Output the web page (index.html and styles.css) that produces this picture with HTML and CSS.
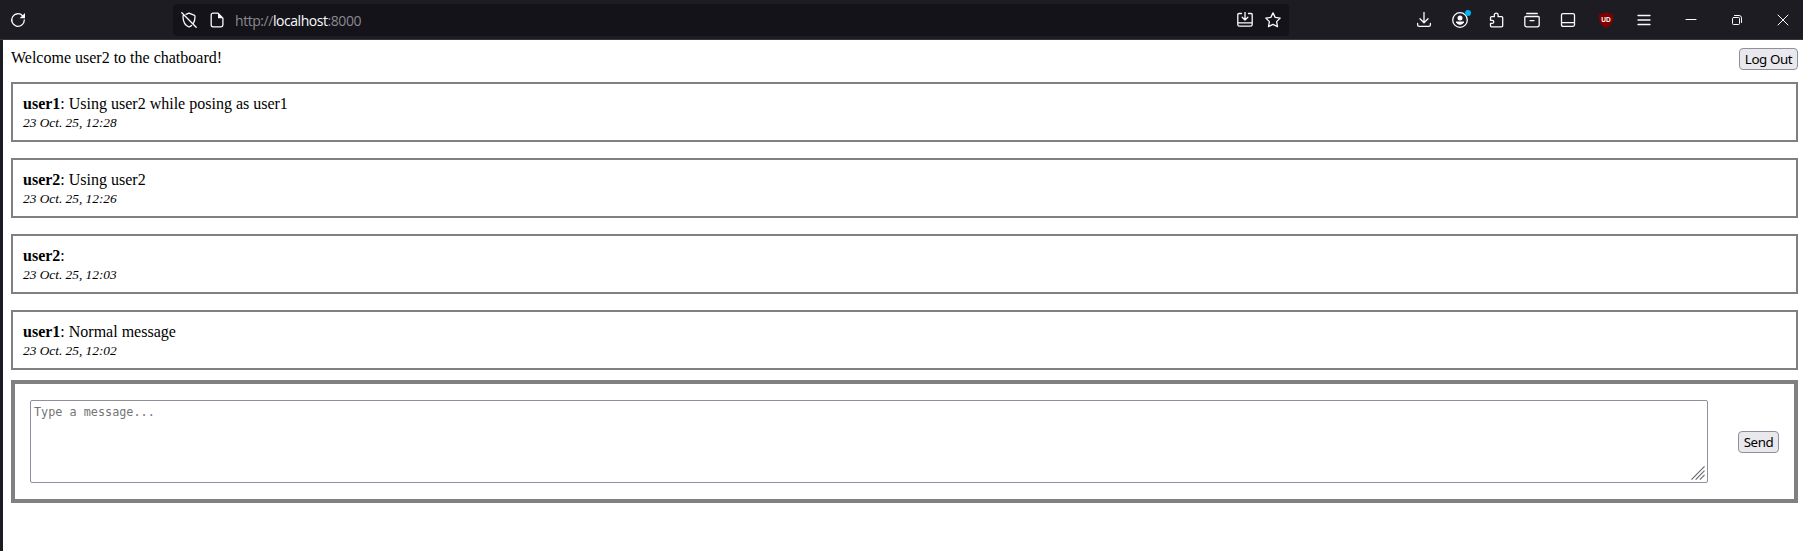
FILE: index.html
```html
<!DOCTYPE html>
<html lang="en">
<head>
<meta charset="utf-8">
<title>Chatboard</title>
<link rel="stylesheet" href="styles.css">
</head>
<body>
<div class="toolbar">
  <span class="tool reload"><svg class="icon" viewBox="0 0 16 16"><path d="M14.3 8A6.3 6.3 0 1 1 12.600 3.700"/><path class="solid" d="M15 1v5.200H9.600z"/></svg></span>
  <div class="urlbar">
    <svg class="icon" viewBox="0 0 16 16"><path d="M5 2.300 8 1.200l5 1.900q1 .4 1 1.400c0 3-.5 5.300-1.800 7.200M10.600 13.500Q9.300 14.500 8 15C4 13.400 2 9.800 2 4.500q0-.6.300-1M.8.800l14.400 14.400"/></svg>
    <svg class="icon" viewBox="0 0 16 16"><path d="M4 1.200h5l4.900 4.900V13q0 1.800-1.800 1.800H4Q2.200 14.800 2.200 13V3Q2.200 1.200 4 1.200z"/><path class="solid" d="M9 1v5.200h5z"/></svg>
    <span class="url">http://<b>localhost</b>:8000</span>
    <svg class="icon install" viewBox="0 0 16 16"><path d="M4.500 1.500H2Q.8 1.500.8 2.700v9.800q0 1.700 1.700 1.700h11q1.700 0 1.700-1.700V2.700q0-1.200-1.200-1.200h-2.500M1 10.800h14M8 0v7.500M5.200 5.200 8 8l2.800-2.800"/></svg>
    <svg class="icon" viewBox="0 0 16 16"><path d="m8 .9 2.200 4.500 5 .7-3.600 3.500.9 5L8 12.300l-4.500 2.300.9-5L.8 6.100l5-.7z"/></svg>
  </div>
  <div class="actions">
    <span class="tool"><svg class="icon" viewBox="0 0 16 16"><path d="M8 .5v10M4 6.700l4 4 4-4M1.600 11.500v1.200q0 1.700 1.700 1.700h9.400q1.700 0 1.700-1.700v-1.200"/></svg></span>
    <span class="tool account"><svg class="icon" viewBox="0 0 16 16"><circle cx="8" cy="8" r="7.300"/><circle class="solid" cx="8" cy="5.900" r="2.500"/><path class="solid" d="M4 9.500h8v.8Q10.800 13 8 13t-4-2.700z"/></svg><i class="dot"></i></span>
    <span class="tool"><svg class="icon" viewBox="0 0 16 16"><path d="M2.500 8.300V5.700q0-1 1-1h2.800V3a1.900 1.900 0 0 1 3.800 0v1.700h3.600q1 0 1 1v8q0 1.100-1 1.100H3.500q-1 0-1-1v-2.500h1.800a1.450 1.450 0 0 0 0-3z"/></svg></span>
    <span class="tool"><svg class="icon" viewBox="0 0 16 16"><path d="M2.700 1.500h10.600M1.800 4.500h12.400q1 0 1 1v7.300q0 2-2 2H2.800q-2 0-2-2V5.500q0-1 1-1zM6 8.600h4"/></svg></span>
    <span class="tool"><svg class="icon" viewBox="0 0 16 16"><path d="M3 1.700h10q1.500 0 1.500 1.500v9.600q0 1.500-1.500 1.500H3q-1.500 0-1.500-1.500V3.200Q1.500 1.700 3 1.700zM1.700 10.700h12.600"/></svg></span>
    <span class="tool blocker"><svg class="shield" viewBox="0 0 16 16"><path d="M8 .2Q11 2 14.900 2v5.500Q14.900 13 8 15.900 1.100 13 1.100 7.500V2Q5 2 8 .2z"/><text x="8" y="9.800" text-anchor="middle">UD</text></svg></span>
    <span class="tool menu"><svg class="icon" viewBox="0 0 16 16"><path d="M2 3.500h12M2 8h12M2 12.500h12"/></svg></span>
    <span class="tool window"><svg class="icon thin" viewBox="0 0 16 16"><path d="M3 7.500h10"/></svg></span>
    <span class="tool window"><svg class="icon thin" viewBox="0 0 16 16"><path d="M4.500 5.500h5q1 0 1 1v5q0 1-1 1h-5q-1 0-1-1v-5q0-1 1-1zM5.500 3.500H10q2.500 0 2.500 2.500v4.500"/></svg></span>
    <span class="tool close"><svg class="icon thin" viewBox="0 0 16 16"><path d="m3 3 10 10M13 3 3 13"/></svg></span>
  </div>
</div>
<main class="page">
  <header class="welcome"><span class="greeting">Welcome user2 to the chatboard!</span><button class="button logout">Log Out</button></header>
  <section class="messages">
    <article class="message"><div><b>user1</b>: Using user2 while posing as user1</div><time class="date">23 Oct. 25, 12:28</time></article>
    <article class="message"><div><b>user2</b>: Using user2</div><time class="date">23 Oct. 25, 12:26</time></article>
    <article class="message"><div><b>user2</b>:</div><time class="date">23 Oct. 25, 12:03</time></article>
    <article class="message"><div><b>user1</b>: Normal message</div><time class="date">23 Oct. 25, 12:02</time></article>
  </section>
  <form class="composer">
    <div class="field">
      <textarea class="input" placeholder="Type a message..."></textarea>
      <svg class="grip" viewBox="0 0 15 15"><path d="M.5 14.500l14-14M5 14.500l9.500-9.500M9.500 14.500l5-5"/></svg>
    </div>
    <button class="button send" type="button">Send</button>
  </form>
</main>
</body>
</html>
```
FILE: styles.css
```css
* { box-sizing: border-box; }
body {
  margin: 0;
  height: 551px;
  overflow: hidden;
  display: flex;
  flex-direction: column;
  background: #1c1b22;
  color: #000;
  font: 16px/18px "Liberation Serif", serif;
}
.toolbar {
  height: 40px;
  flex: none;
  display: flex;
  align-items: center;
  border-bottom: 1px solid #38373d;
  background: #1d1c23;
}
.tool {
  width: 36px;
  height: 32px;
  display: flex;
  align-items: center;
  justify-content: center;
}
.icon {
  width: 16px;
  height: 16px;
  flex: none;
  fill: none;
  stroke: #fbfbfe;
  stroke-width: 1.3;
  stroke-linecap: round;
  stroke-linejoin: round;
}
.icon .solid { fill: #fbfbfe; stroke: none; }
.thin { stroke-width: 1; }
.urlbar {
  width: 1116px;
  height: 32px;
  margin-left: 137px;
  padding: 0 8px;
  display: flex;
  align-items: center;
  gap: 12px;
  border-radius: 4px;
  background: #141319;
}
.url {
  margin-left: -2px;
  padding-top: 2px;
  color: #8a898f;
  font: 14px/20px "Open Sans", sans-serif;
  letter-spacing: -0.45px;
}
.url b { color: #fbfbfe; font-weight: 400; }
.install { margin-left: auto; }
.actions { margin-left: auto; display: flex; }
.account { position: relative; }
.dot {
  position: absolute;
  top: 6px;
  right: 7px;
  width: 6px;
  height: 6px;
  border-radius: 50%;
  background: #00b3f4;
}
.blocker { width: 38px; margin-left: 1px; }
.shield { width: 16px; height: 16px; fill: #800000; }
.shield text { fill: #fff; font: bold 6.5px "Liberation Sans", sans-serif; }
.menu { width: 38px; margin-right: 5px; }
.window { width: 46px; }
.close { width: 40px; margin-left: 3px; }
.page {
  flex: 1;
  margin-left: 3px;
  padding: 8px 5px 8px 8px;
  background: #fff;
}
.welcome {
  height: 22px;
  margin-bottom: 12px;
  display: flex;
  justify-content: space-between;
  align-items: flex-start;
}
.greeting { padding-top: 1px; }
.messages { display: grid; gap: 16px; margin-bottom: 10px; }
.message {
  height: 60px;
  padding: 11px 10px;
  border: 2px solid #808080;
}
.date {
  display: block;
  margin-top: 1px;
  font-size: 13.333px;
  font-style: italic;
}
.button {
  height: 22px;
  padding: 0;
  border: 1px solid #8f8f9d;
  border-radius: 4px;
  background: #e9e9ed;
  color: #000;
  font: 13.333px/20px "Noto Sans", sans-serif;
  letter-spacing: -0.4px;
  white-space: nowrap;
}
.logout { width: 59px; }
.send { width: 41px; }
.composer {
  height: 123px;
  padding: 0 15px;
  display: flex;
  align-items: center;
  gap: 30px;
  border: 4px solid #808080;
}
.field { flex: 1; height: 83px; position: relative; }
.input {
  display: block;
  width: 100%;
  height: 100%;
  padding: 3px;
  resize: none;
  border: 1px solid #8f8f9d;
  border-radius: 2px;
  font: 11.8px/17px "DejaVu Sans Mono", monospace;
}
.input::placeholder { color: #757575; }
.grip {
  position: absolute;
  right: 3px;
  bottom: 3px;
  width: 14px;
  height: 14px;
  fill: none;
  stroke: #666;
  stroke-width: 1.2;
}
```
